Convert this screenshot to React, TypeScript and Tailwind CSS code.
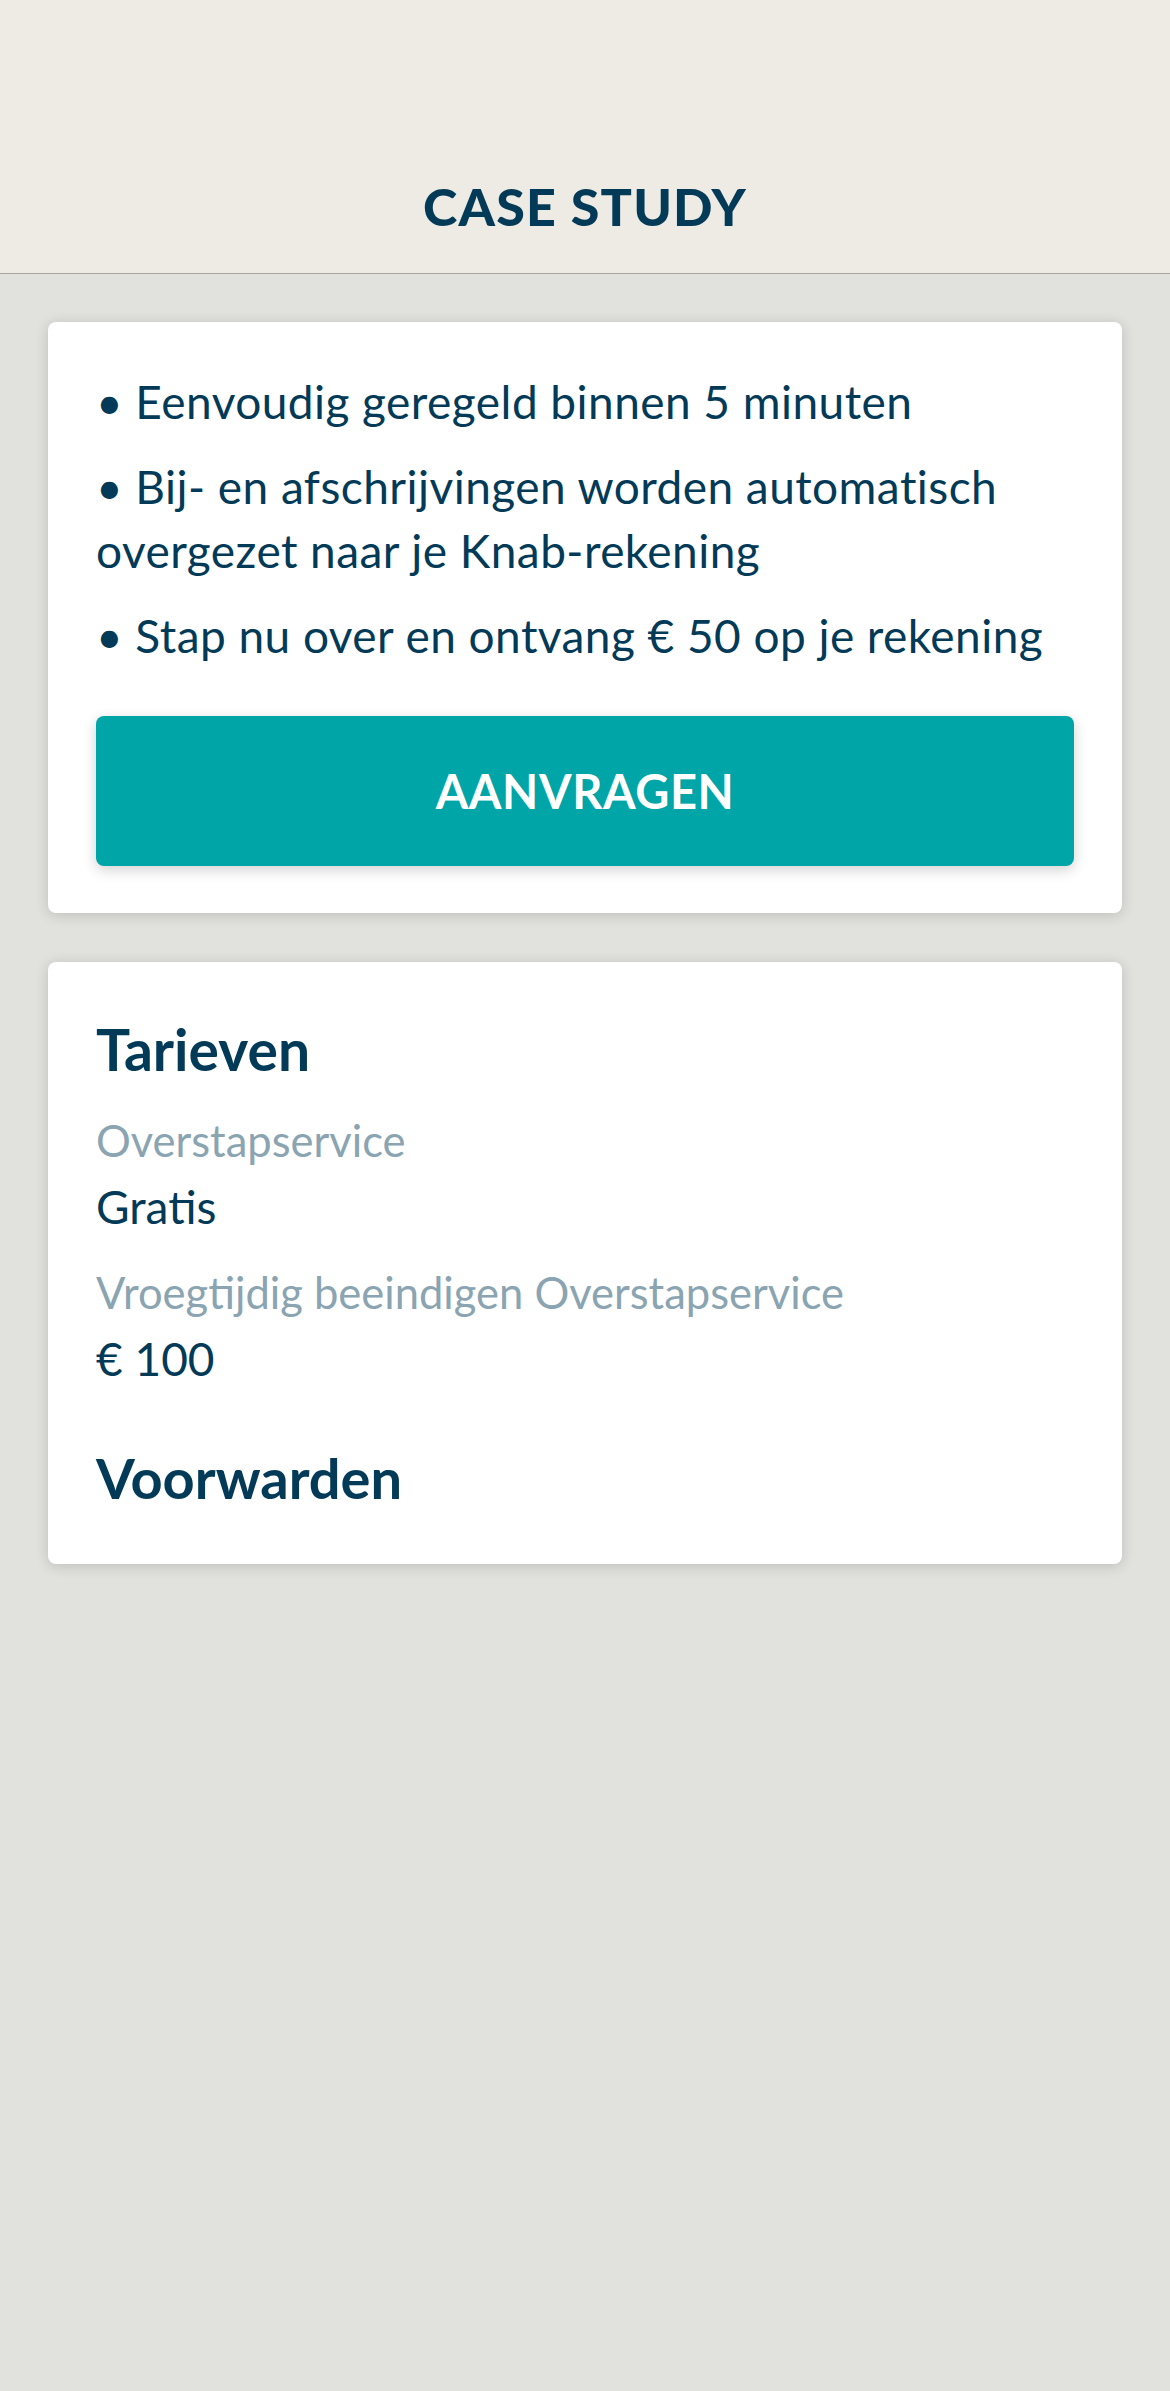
const NAVY = "text-[#033a57]";

export default function App() {
  return (
    <div className="min-h-screen bg-[#e1e2dd] font-['Lato',sans-serif]">
      {/* Header */}
      <div className="h-[274px] bg-[#eeebe4] border-b border-[#a4a4a0] flex items-end justify-center pb-[41px]">
        <h1 className={`text-[52px] leading-none font-black tracking-[1.2px] ${NAVY}`}>CASE STUDY</h1>
      </div>

      <div className="px-12 pt-12 flex flex-col gap-[49px]">
        {/* Promo card */}
        <div className="bg-white rounded-lg shadow-[0_2px_14px_rgba(0,0,0,0.16)] px-12 pt-12 pb-[47px]">
          <div className={`flex flex-col gap-[21px] text-[46px] leading-[64px] tracking-[0.45px] ${NAVY}`}>
            <p>•&nbsp;Eenvoudig geregeld binnen 5 minuten</p>
            <p>•&nbsp;Bij- en afschrijvingen worden automatisch overgezet naar je Knab-rekening</p>
            <p>•&nbsp;Stap nu over en ontvang € 50 op je rekening</p>
          </div>
          <button className="mt-12 w-full h-[150px] rounded-lg bg-[#00a5a8] text-white text-[47px] font-bold tracking-[0.6px] shadow-[0_4px_14px_rgba(0,0,0,0.18)]">
            AANVRAGEN
          </button>
        </div>

        {/* Tarieven card */}
        <div className={`bg-white rounded-lg shadow-[0_2px_14px_rgba(0,0,0,0.16)] px-12 pt-[52px] pb-[51px] ${NAVY}`}>
          <h2 className="text-[57px] leading-[70px] font-bold">Tarieven</h2>
          <p className="mt-[26px] text-[43.5px] leading-[60px] text-[#8aa4b2]">Overstapservice</p>
          <p className="mt-[5px] text-[46px] leading-[64px]">Gratis</p>
          <p className="mt-[23px] text-[43.5px] leading-[60px] text-[#8aa4b2]">Vroegtijdig beeindigen Overstapservice</p>
          <p className="mt-[5px] text-[46px] leading-[64px]">€ 100</p>
          <h2 className="mt-[52px] text-[56px] leading-[70px] font-bold">Voorwarden</h2>
        </div>
      </div>
    </div>
  );
}
